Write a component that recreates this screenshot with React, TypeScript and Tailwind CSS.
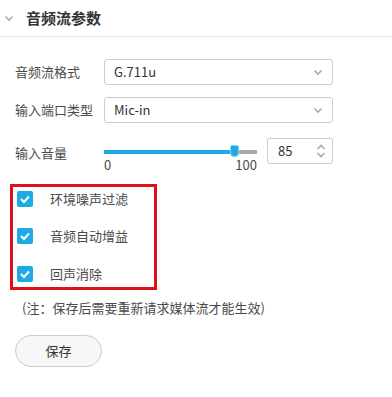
import React from "react";

const Chevron = () => (
  <svg width="10" height="8" viewBox="0 0 10 8" className="text-[#aaa]">
    <path d="M1.5 2.5 L5 6 L8.5 2.5" fill="none" stroke="currentColor" strokeWidth="1.6" />
  </svg>
);

const Check = ({ label }: { label: string }) => (
  <div className="flex items-center h-[16px]">
    <div className="w-[16px] h-[16px] rounded-[2px] bg-[#1eaae4] flex items-center justify-center">
      <svg width="12" height="10" viewBox="0 0 12 10">
        <path d="M2 5 L5 8 L10 2.5" fill="none" stroke="#fff" strokeWidth="2" />
      </svg>
    </div>
    <span className="ml-[17px] text-[13px] text-[#4a4a4a]">{label}</span>
  </div>
);

export default function App() {
  return (
    <div
      className="w-[392px] h-[397px] bg-white text-[#333] overflow-hidden"
      style={{ fontFamily: '"Microsoft YaHei", "Noto Sans CJK SC", sans-serif' }}
    >
      <div className="h-[37px] flex items-center border-b border-[#e6e6e6]">
        <div className="ml-[4px] w-[10px] flex items-center">
          <Chevron />
        </div>
        <span className="ml-[12px] text-[15px] font-bold text-[#333]">音频流参数</span>
      </div>

      <div className="pt-[22px] pl-[15px]">
        <div className="flex items-center h-[26px]">
          <span className="w-[89px] text-[13px] text-[#4a4a4a]">音频流格式</span>
          <div className="w-[229px] h-[26px] border border-[#ccc] rounded-[3px] flex items-center justify-between px-[9px]">
            <span className="text-[13px] text-[#333]">G.711u</span>
            <Chevron />
          </div>
        </div>
        <div className="flex items-center h-[26px] mt-[12px]">
          <span className="w-[89px] text-[13px] text-[#4a4a4a]">输入端口类型</span>
          <div className="w-[229px] h-[26px] border border-[#ccc] rounded-[3px] flex items-center justify-between px-[9px]">
            <span className="text-[13px] text-[#333]">Mic-in</span>
            <Chevron />
          </div>
        </div>
        <div className="flex items-start mt-[15px] h-[38px]">
          <span className="w-[89px] text-[13px] text-[#4a4a4a] mt-[5px]">输入音量</span>
          <div className="w-[153px] flex flex-col pt-[12px]">
            <div className="relative h-[4px] bg-[#aaa]">
              <div className="absolute left-0 top-0 h-[4px] w-[131px] bg-[#1eaae4]" />
              <div className="absolute left-[126px] top-[-5px] w-[9px] h-[12px] bg-[#1eaae4] rounded-t-[2px] rounded-b-[4px] border border-[#8fd3ef]" />
            </div>
            <div className="flex justify-between mt-[3px] text-[13px] text-[#4a4a4a] leading-[15px]">
              <span>0</span>
              <span>100</span>
            </div>
          </div>
          <div className="ml-[10px] w-[66px] h-[26px] border border-[#ccc] rounded-[3px] flex items-center justify-between pl-[10px] pr-[6px]">
            <span className="text-[13px] text-[#333]">85</span>
            <svg width="10" height="16" viewBox="0 0 10 16" className="text-[#aaa]">
              <path d="M1.5 6 L5 2.5 L8.5 6" fill="none" stroke="currentColor" strokeWidth="1.6" />
              <path d="M1.5 10 L5 13.5 L8.5 10" fill="none" stroke="currentColor" strokeWidth="1.6" />
            </svg>
          </div>
        </div>
      </div>

      <div className="ml-[10px] mt-[8px] w-[147px] h-[106px] border-[3px] border-[#e0101a] pl-[4px] pt-[4px] flex flex-col gap-[21px]">
        <Check label="环境噪声过滤" />
        <Check label="音频自动增益" />
        <div className="mt-[1px]">
          <Check label="回声消除" />
        </div>
      </div>

      <div className="ml-[22px] mt-[8px] text-[13px] text-[#4a4a4a]">(注：保存后需要重新请求媒体流才能生效)</div>

      <button className="ml-[15px] mt-[17px] w-[87px] h-[32px] rounded-full border border-[#ccc] bg-[#f7f7f7] text-[13px] text-[#333]">
        保存
      </button>
    </div>
  );
}
